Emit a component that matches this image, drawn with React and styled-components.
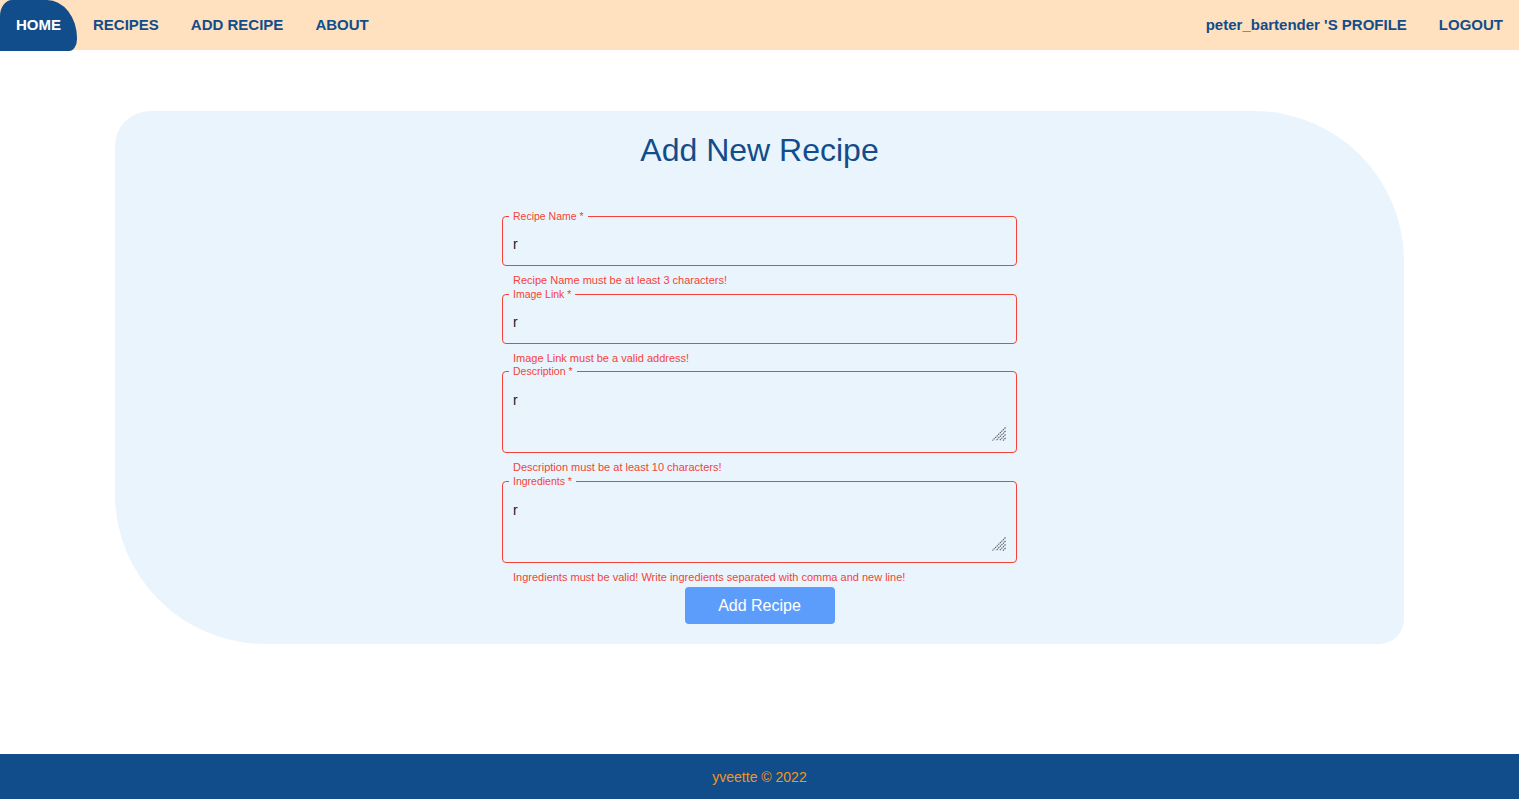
import React, { useState } from 'react';
import styled, { createGlobalStyle } from 'styled-components';

const GlobalStyle = createGlobalStyle`
    * { box-sizing: border-box; }
    body {
        margin: 0;
        font-family: "Liberation Sans", Arial, sans-serif;
        background: #ffffff;
    }
`;

const Page = styled.div`
    min-height: 100vh;
    display: flex;
    flex-flow: column;
`;

const Header = styled.header`
    height: 50px;
    background: #ffe1bf;
    display: flex;
    justify-content: space-between;
    align-items: stretch;
`;

const NavGroup = styled.nav`
    display: flex;
    align-items: stretch;
`;

const NavLink = styled.a`
    display: flex;
    align-items: center;
    padding: ${props => (props.$active ? '0 16px 2px' : '0 16px 1px')};
    font-size: 15px;
    font-weight: bold;
    text-transform: ${props => (props.$plain ? 'none' : 'uppercase')};
    text-decoration: none;
    cursor: pointer;
    color: ${props => (props.$active ? '#ffffff' : '#114d8a')};
    background: ${props => (props.$active ? '#114d8a' : 'transparent')};
    border-radius: ${props => (props.$active ? '12px 30px 8px 0 / 16px 38px 12px 0' : '0')};
    height: ${props => (props.$active ? '51px' : 'auto')};
`;

const Main = styled.main`
    flex: 1;
    padding: 61px 115px 110px;
`;

const Card = styled.section`
    background: #eaf4fd;
    border-radius: 35px 150px 25px 150px;
    padding: 21px 0 20px;
    display: flex;
    flex-flow: column;
    align-items: center;
`;

const Title = styled.h1`
    margin: 0 0 41px;
    font-size: 32px;
    line-height: 37px;
    font-weight: normal;
    color: #114d8a;
`;

const Form = styled.form`
    width: 515px;
    display: flex;
    flex-flow: column;
`;

const Fieldset = styled.fieldset`
    position: relative;
    margin: 0;
    padding: 0 10px ${props => (props.$multiline ? '11px' : '0')};
    border: 1px solid #f44336;
    border-radius: 4px;
    min-width: 0;

    legend {
        margin-left: -4px;
        padding: 0 4px;
        font-size: 10.5px;
        line-height: 13px;
        color: #f44336;
    }
`;

const TextInput = styled.input`
    display: block;
    width: 100%;
    height: 42px;
    border: none;
    background: transparent;
    outline: none;
    padding: 0;
    font-family: inherit;
    font-size: 14px;
    color: #1a1a1a;
`;

const TextArea = styled.textarea`
    display: block;
    width: 100%;
    height: 63px;
    border: none;
    background: transparent;
    outline: none;
    padding: 14px 0 0;
    font-family: inherit;
    font-size: 14px;
    line-height: 17px;
    color: #1a1a1a;
    resize: none;
`;

const ResizeGrip = styled.svg`
    position: absolute;
    right: 10px;
    bottom: 11px;
    width: 14px;
    height: 14px;
    pointer-events: none;
`;

const ErrorText = styled.div`
    margin: 8px 0 0 11px;
    font-size: 11px;
    line-height: 13.5px;
    color: #f44336;
`;

const SubmitButton = styled.button`
    align-self: center;
    margin-top: 3px;
    width: 150px;
    height: 37px;
    border: none;
    border-radius: 4px;
    background: #5c9dfc;
    color: #ffffff;
    font-family: inherit;
    font-size: 16px;
    cursor: pointer;
`;

const Footer = styled.footer`
    height: 45px;
    background: #114d8a;
    color: #f7941d;
    font-size: 14px;
    display: flex;
    align-items: center;
    justify-content: center;
`;

const fields = [
    { name: 'name', label: 'Recipe Name *', multiline: false, error: 'Recipe Name must be at least 3 characters!' },
    { name: 'imgUrl', label: 'Image Link *', multiline: false, error: 'Image Link must be a valid address!' },
    { name: 'description', label: 'Description *', multiline: true, error: 'Description must be at least 10 characters!' },
    { name: 'ingredients', label: 'Ingredients *', multiline: true, error: 'Ingredients must be valid! Write ingredients separated with comma and new line!' },
];

function Grip() {
    return (
        <ResizeGrip viewBox="0 0 14 14">
            <g stroke="#555a61" strokeWidth="1.1" strokeDasharray="1.4 0.8">
                <line x1="13.5" y1="0.5" x2="0.5" y2="13.5" />
                <line x1="13.5" y1="4" x2="4" y2="13.5" />
                <line x1="13.5" y1="7.5" x2="7.5" y2="13.5" />
                <line x1="13.5" y1="11" x2="11" y2="13.5" />
            </g>
        </ResizeGrip>
    );
}

export default function App() {
    const [values, setValues] = useState({ name: 'r', imgUrl: 'r', description: 'r', ingredients: 'r' });

    function onChange(event) {
        setValues({ ...values, [event.target.name]: event.target.value });
    }

    return (
        <Page>
            <GlobalStyle />
            <Header>
                <NavGroup>
                    <NavLink $active>Home</NavLink>
                    <NavLink>Recipes</NavLink>
                    <NavLink>Add Recipe</NavLink>
                    <NavLink>About</NavLink>
                </NavGroup>
                <NavGroup>
                    <NavLink $plain>peter_bartender 'S PROFILE</NavLink>
                    <NavLink>Logout</NavLink>
                </NavGroup>
            </Header>
            <Main>
                <Card>
                    <Title>Add New Recipe</Title>
                    <Form onSubmit={e => e.preventDefault()}>
                        {fields.map(field => (
                            <div key={field.name}>
                                <Fieldset $multiline={field.multiline}>
                                    <legend>{field.label}</legend>
                                    {field.multiline ? (
                                        <>
                                            <TextArea name={field.name} value={values[field.name]} onChange={onChange} />
                                            <Grip />
                                        </>
                                    ) : (
                                        <TextInput name={field.name} value={values[field.name]} onChange={onChange} />
                                    )}
                                </Fieldset>
                                <ErrorText>{field.error}</ErrorText>
                            </div>
                        ))}
                        <SubmitButton type="submit">Add Recipe</SubmitButton>
                    </Form>
                </Card>
            </Main>
            <Footer>yveette © 2022</Footer>
        </Page>
    );
}
